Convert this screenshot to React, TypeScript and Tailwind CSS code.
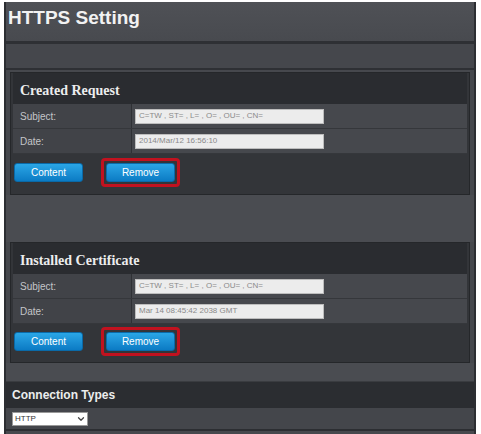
import { ChevronDown } from 'lucide-react';

const sans = { fontFamily: '"Liberation Sans", Arial, sans-serif' };

function Field({ label, value }: { label: string; value: string }) {
  return (
    <div className="flex h-[25px] border-b border-[#35373b]">
      <div className="w-[119px] flex items-center pl-[7px] bg-[#414348] border-r border-[#2f3135] text-[10px] text-[#c4c6c9]">
        {label}
      </div>
      <div className="flex-1 flex items-center pl-[3px] bg-[#46484d]">
        <div className="w-[189px] h-[15px] bg-[#ececec] border border-[#bdbdbd] flex items-center px-[3px] text-[8px] text-[#8a8a8a] leading-none">
          {value}
        </div>
      </div>
    </div>
  );
}

function BlueButton({ children }: { children: string }) {
  return (
    <div className="w-[69px] h-[19px] rounded-[3px] bg-gradient-to-b from-[#2aa6e6] to-[#0b7bc4] border border-[#0a6aa8] flex items-center justify-center text-[10px] text-white">
      {children}
    </div>
  );
}

function Panel({ title, subject, date, footH }: { title: string; subject: string; date: string; footH: string }) {
  return (
    <div className="mx-[4px] bg-[#333539] border border-[#25272a] px-[2px]">
      <div
        className="h-[31px] flex items-end pb-[3px] pl-[7px] bg-[#2a2c30] text-[14px] font-bold text-[#eceded]"
        style={{ fontFamily: '"Liberation Serif", "Times New Roman", serif' }}
      >
        {title}
      </div>
      <Field label="Subject:" value={subject} />
      <Field label="Date:" value={date} />
      <div className={`flex items-center gap-[18px] pl-[1px] ${footH} pb-[4px]`}>
        <BlueButton>Content</BlueButton>
        <div className="rounded-[4px] border-[3px] border-[#c1121f] p-[2px] -my-[5px]">
          <BlueButton>Remove</BlueButton>
        </div>
      </div>
    </div>
  );
}

export default function App() {
  return (
    <div className="w-[481px] h-[434px] bg-white pt-[2px] overflow-hidden" style={sans}>
      <div className="ml-[4px] mr-[5px] h-[432px] bg-[#46484d] border-l-2 border-r-2 border-[#2c2e32] flex flex-col">
        {/* Title */}
        <div className="h-[39px] bg-gradient-to-b from-[#4f5156] to-[#484a4f] pl-[2px] pt-[6px]">
          <h1 className="text-[19px] font-bold text-[#f2f2f2] leading-none">HTTPS Setting</h1>
        </div>
        <div className="h-[3px] bg-[#2e3034]" />
        <div className="h-[24px] bg-[#45474c]" />
        <div className="h-[2px] bg-[#2e3034]" />

        <div className="pt-[2px]">
          <Panel
            title="Created Request"
            footH="h-[40px]"
            subject="C=TW , ST= , L= , O= , OU= , CN="
            date="2014/Mar/12 16:56:10"
          />
        </div>

        <div className="h-[47px] bg-[#4a4c51]" />

        <Panel
          title="Installed Certificate"
          footH="h-[38px]"
          subject="C=TW , ST= , L= , O= , OU= , CN="
          date="Mar 14 08:45:42 2038 GMT"
        />

        <div className="h-[19px] bg-[#4a4c51] border-b border-[#3a3c40]" />

        {/* Connection Types */}
        <div className="h-[26px] bg-[#2b2d31] flex items-center pl-[6px] text-[12px] font-bold text-[#eceded]">
          Connection Types
        </div>
        <div className="h-[23px] bg-[#44464b] flex items-center pl-[6px] border-b-2 border-[#2c2e32]">
          <div className="w-[76px] h-[14px] bg-white border border-[#999] flex items-center justify-between pl-[2px] pr-[1px] text-[8px] text-[#333]">
            HTTP
            <ChevronDown className="w-[10px] h-[10px] text-[#444]" strokeWidth={3} />
          </div>
        </div>
      </div>
    </div>
  );
}
